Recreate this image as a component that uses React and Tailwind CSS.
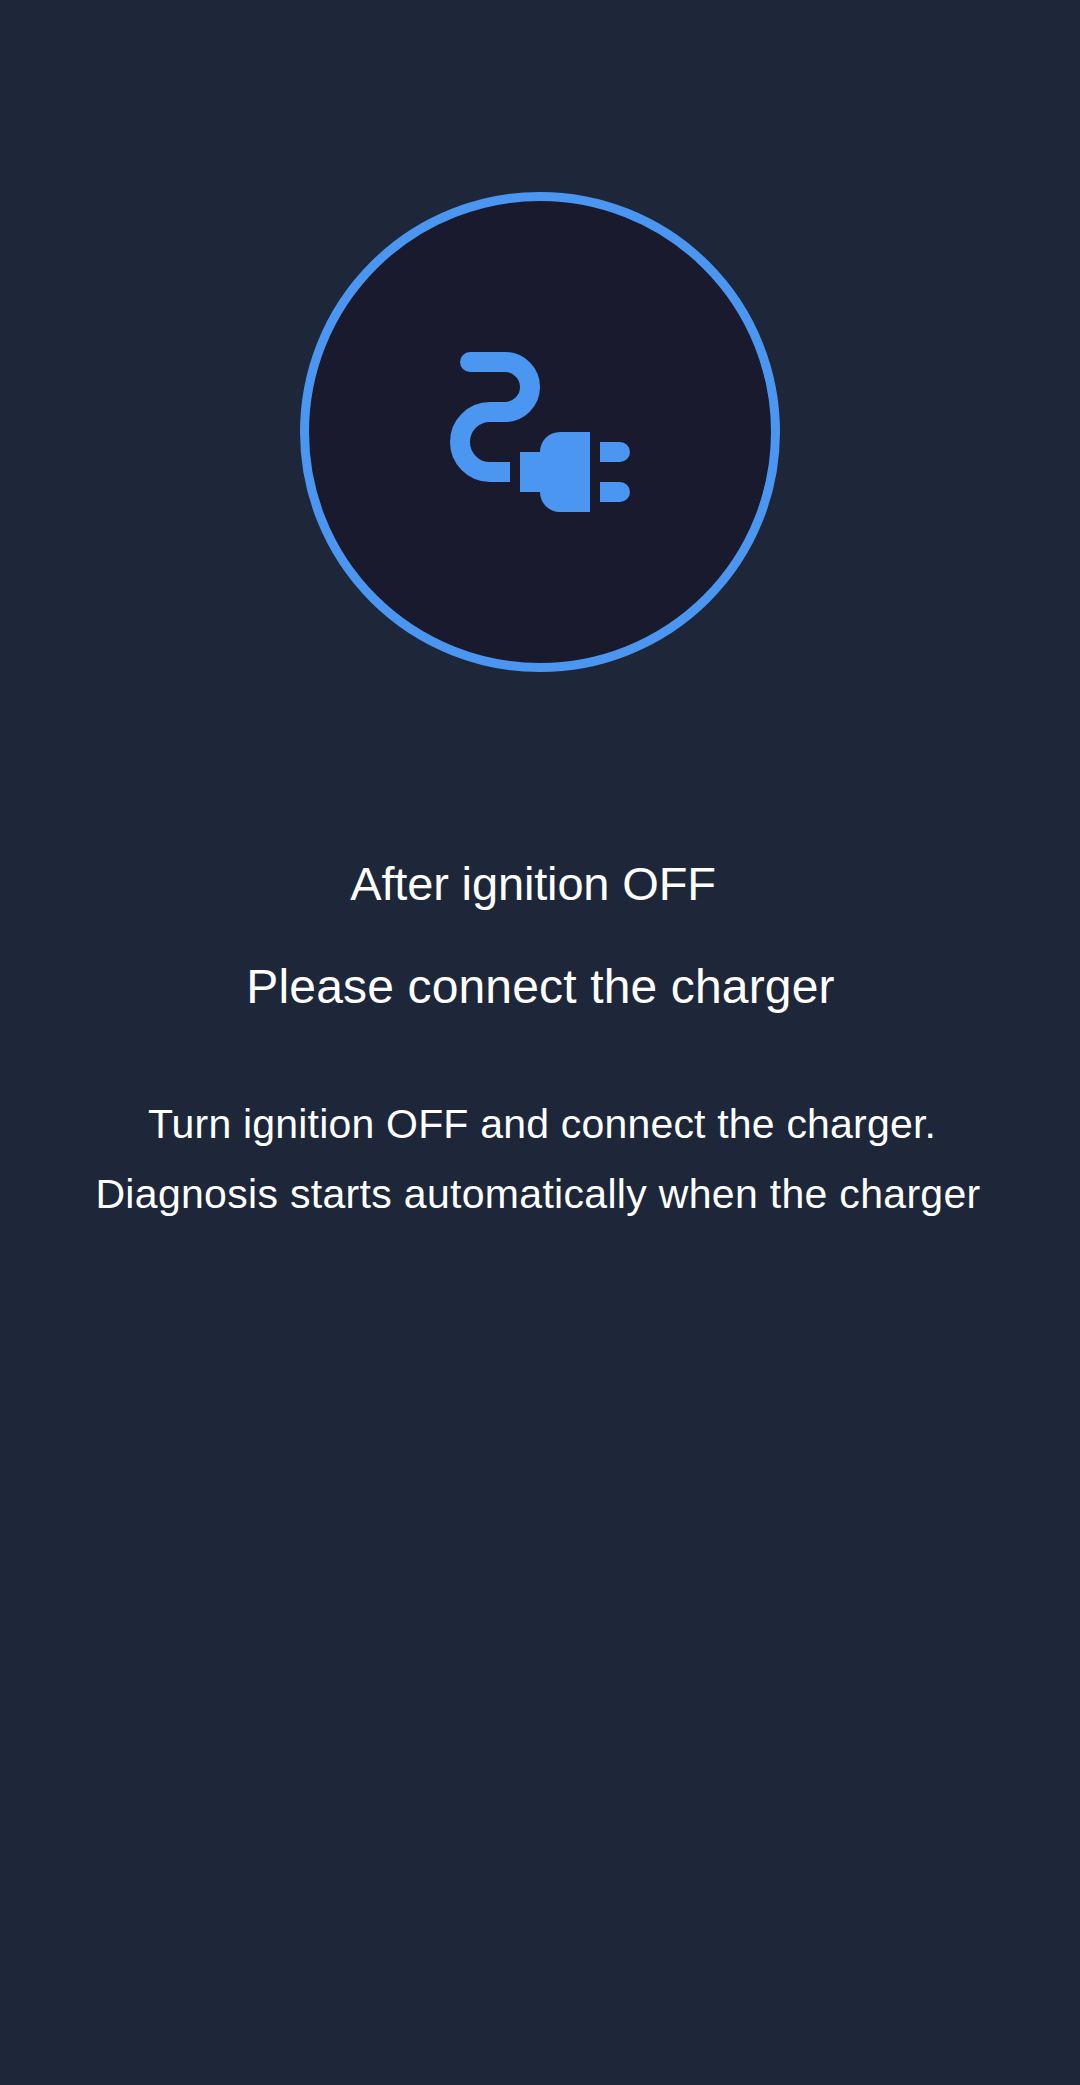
const BLUE = "#4a96f0";

function PlugIcon() {
  return (
    <svg viewBox="0 0 24 24" className="w-[240px] h-[240px]" fill="none">
      <circle cx="5" cy="5" r="1" fill={BLUE} />
      <path d="M5 5H8.5A2.5 2.5 0 0 1 8.5 10H7A3 3 0 0 0 7 16H9" stroke={BLUE} strokeWidth="2" />
      <path d="M10 14H12V14A2 2 0 0 1 14 12H17V20H14A2 2 0 0 1 12 18H10Z" fill={BLUE} />
      <path d="M18 13H20A1 1 0 0 1 20 15H18Z" fill={BLUE} />
      <path d="M18 17H20A1 1 0 0 1 20 19H18Z" fill={BLUE} />
    </svg>
  );
}

export default function App() {
  return (
    <div className="min-h-[2085px] bg-[#1e2739] flex flex-col items-center pt-[192px] text-white font-['Liberation_Sans',Arial,sans-serif]">
      <div className="w-[480px] h-[480px] rounded-full border-[9px] border-[#4a96f0] bg-[#1a1a2e] flex items-center justify-center">
        <PlugIcon />
      </div>

      <h1 className="mt-[184px] mr-[14px] text-[47px] leading-[56px] tracking-[-0.15px] font-normal">After ignition OFF</h1>
      <h2 className="mt-[47px] ml-[1px] text-[48px] leading-[56px] tracking-[0.15px] font-normal">Please connect the charger</h2>

      <div className="mt-[74px] text-[41px] leading-[70px] text-center">
        <p className="ml-[4px] tracking-[0.19px]">Turn ignition OFF and connect the charger.</p>
        <p className="mr-[4px] tracking-[0.31px]">Diagnosis starts automatically when the charger</p>
      </div>
    </div>
  );
}
